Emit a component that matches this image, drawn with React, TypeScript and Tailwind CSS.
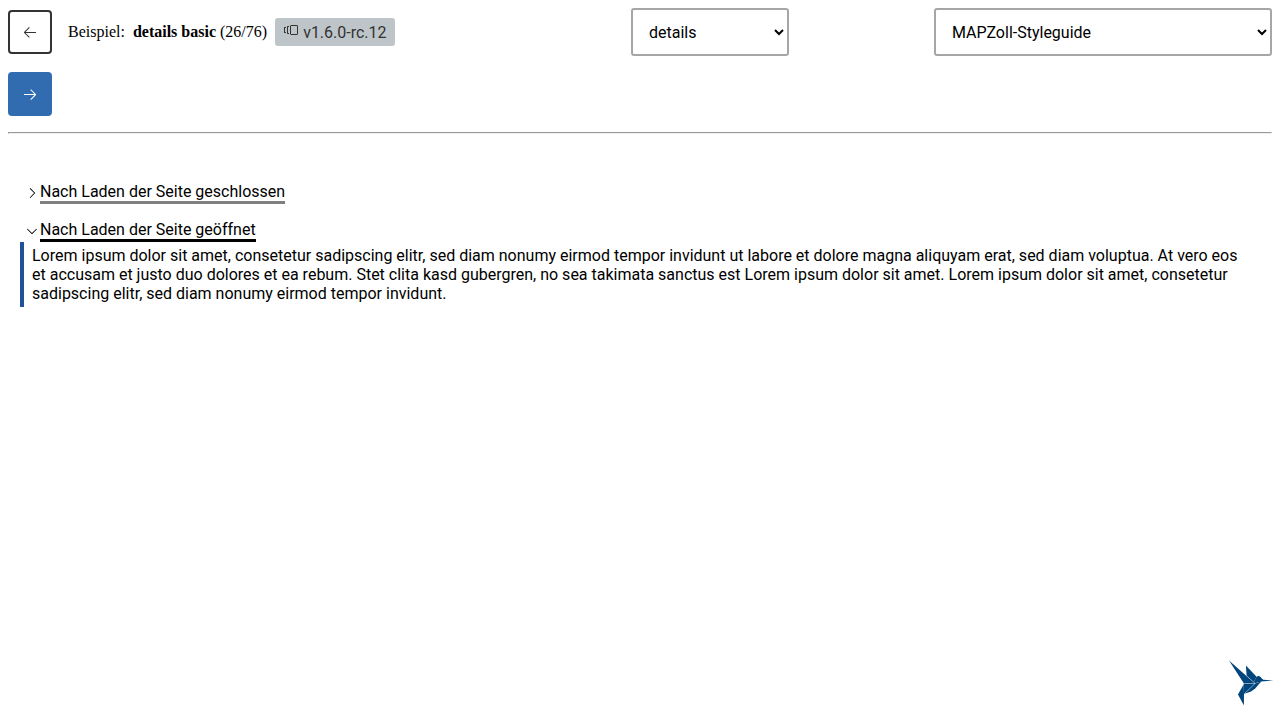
import { useState } from 'react';
import type { ReactNode } from 'react';
import {
  VscArrowLeft,
  VscArrowRight,
  VscChevronDown,
  VscChevronRight,
  VscVersions,
} from 'react-icons/vsc';

function NavButton({ label, primary, children }: { label: string; primary?: boolean; children: ReactNode }) {
  return (
    <button
      type="button"
      aria-label={label}
      className={
        primary
          ? 'flex size-11 shrink-0 items-center justify-center rounded border-2 border-[#316bb0] bg-[#316bb0] text-white'
          : 'flex size-11 shrink-0 items-center justify-center rounded border-2 border-[#333333] bg-white text-[#333333]'
      }
    >
      {children}
    </button>
  );
}

function Picker({ label, option, className }: { label: string; option: string; className: string }) {
  return (
    <select
      aria-label={label}
      className={`h-12 rounded-[3px] border-2 border-[#a6a6a6] bg-white pl-3 text-base text-black ${className}`}
    >
      <option>{option}</option>
    </select>
  );
}

function Disclosure({ title, initiallyOpen, children }: { title: string; initiallyOpen?: boolean; children: ReactNode }) {
  const [open, setOpen] = useState(Boolean(initiallyOpen));
  const Chevron = open ? VscChevronDown : VscChevronRight;
  return (
    <details open={open} onToggle={(e) => setOpen(e.currentTarget.open)}>
      <summary className="flex cursor-pointer list-none items-start pl-1">
        <Chevron className="mt-[3px] size-4 shrink-0" aria-hidden="true" />
        <span className={open ? 'border-b-[3px] border-black' : 'border-b-[3px] border-[#808080]'}>{title}</span>
      </summary>
      {open && <div className="border-l-4 border-[#1f5296] px-2 py-1">{children}</div>}
    </details>
  );
}

function Hummingbird() {
  return (
    <svg viewBox="0 0 60 60" className="size-[60px]" role="img" aria-label="KoliBri">
      <g fill="#00457c">
        <path d="M9 8.6 L26.2 23.8 L34.4 31.1 L23.6 31.1 Z" />
        <path d="M25.9 13.6 L36.6 24.8 L33.7 30 L26.6 23.6 Z" />
        <path d="M34 29.6 L36.4 25 L38.4 23.8 L40.6 25 L42.4 27.4 L40.6 29.8 L34.6 31.2 Z" />
        <path d="M23.6 31.5 L34.8 31.5 L24 42 Z" />
        <path d="M35.2 31.5 L41.6 29.2 L38.6 32.6 L35.2 36.4 L31 39.4 L24.8 41.8 Z" />
        <path d="M23.6 32.6 L24 41.8 L23.9 53.4 L18 42.6 Z" />
        <path d="M41 26.2 L43.4 27.8 L53.4 28.6 L41 29.6 Z" />
      </g>
    </svg>
  );
}

export default function App() {
  return (
    <div className="flex min-h-screen flex-col bg-white p-2 font-['Roboto',sans-serif] text-base leading-[19px] text-black">
      <header className="flex flex-col gap-4">
        <div className="grid grid-cols-[607fr_287fr_338fr] items-center gap-4">
          <div className="flex items-center gap-4">
            <NavButton label="zurück">
              <VscArrowLeft className="size-4" />
            </NavButton>
            <div className="flex items-center gap-2 whitespace-nowrap font-['Liberation_Serif',serif] leading-[18px]">
              <span>Beispiel:</span>
              <span>
                <strong>details basic</strong> (26/76)
              </span>
              <span className="flex h-7 items-center gap-1 rounded-[3px] bg-[#bec5c9] px-2 font-['Roboto',sans-serif] leading-[19px] text-[#333333]">
                <VscVersions className="mb-1 size-4" aria-hidden="true" />
                <span>v1.6.0-rc.12</span>
              </span>
            </div>
          </div>
          <Picker label="Komponente" option="details" className="w-[158px]" />
          <Picker label="Theme" option="MAPZoll-Styleguide" className="w-full" />
        </div>
        <NavButton label="weiter" primary>
          <VscArrowRight className="size-4" />
        </NavButton>
        <hr className="h-0.5 border border-t-[#9a9a9a] border-r-[#eeeeee] border-b-[#eeeeee] border-l-[#9a9a9a]" />
      </header>
      <main className="flex flex-1 flex-col gap-4 px-3 pt-12">
        <Disclosure title="Nach Laden der Seite geschlossen">
          <p>Lorem ipsum dolor sit amet, consetetur sadipscing elitr.</p>
        </Disclosure>
        <Disclosure title="Nach Laden der Seite geöffnet" initiallyOpen>
          <p>
            Lorem ipsum dolor sit amet, consetetur sadipscing elitr, sed diam nonumy eirmod tempor invidunt ut labore et
            dolore magna aliquyam erat, sed diam voluptua. At vero eos et accusam et justo duo dolores et ea rebum. Stet
            clita kasd gubergren, no sea takimata sanctus est Lorem ipsum dolor sit amet. Lorem ipsum dolor sit amet,
            consetetur sadipscing elitr, sed diam nonumy eirmod tempor invidunt.
          </p>
        </Disclosure>
      </main>
      <div className="fixed right-0 bottom-2">
        <Hummingbird />
      </div>
    </div>
  );
}
